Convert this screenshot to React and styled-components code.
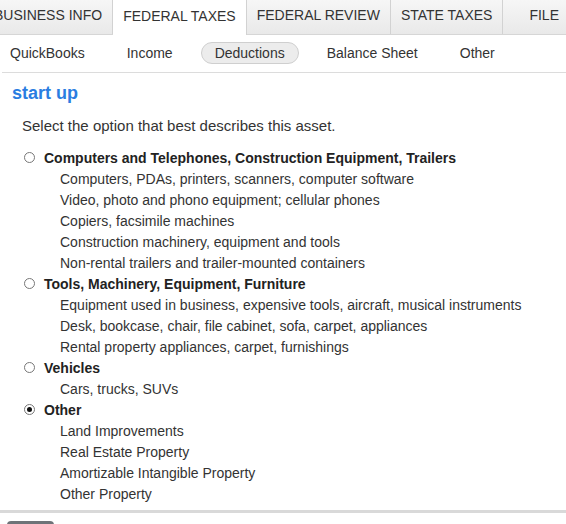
import React from 'react'
import styled, { createGlobalStyle } from 'styled-components'

const GlobalStyle = createGlobalStyle`
  body {
    margin: 0;
    background: #fff;
    font-family: "Liberation Sans", Arial, sans-serif;
    color: #333;
    overflow: hidden;
  }
`

export default function App() {
  const tabs = [
    { label: 'BUSINESS INFO' },
    { label: 'FEDERAL TAXES', active: true },
    { label: 'FEDERAL REVIEW' },
    { label: 'STATE TAXES' },
    { label: 'FILE', wide: true },
  ]

  const subTabs = ['QuickBooks', 'Income', 'Deductions', 'Balance Sheet', 'Other']

  const options = [
    {
      title: 'Computers and Telephones, Construction Equipment, Trailers',
      items: [
        'Computers, PDAs, printers, scanners, computer software',
        'Video, photo and phono equipment; cellular phones',
        'Copiers, facsimile machines',
        'Construction machinery, equipment and tools',
        'Non-rental trailers and trailer-mounted containers',
      ],
    },
    {
      title: 'Tools, Machinery, Equipment, Furniture',
      items: [
        'Equipment used in business, expensive tools, aircraft, musical instruments',
        'Desk, bookcase, chair, file cabinet, sofa, carpet, appliances',
        'Rental property appliances, carpet, furnishings',
      ],
    },
    {
      title: 'Vehicles',
      items: ['Cars, trucks, SUVs'],
    },
    {
      title: 'Other',
      checked: true,
      items: [
        'Land Improvements',
        'Real Estate Property',
        'Amortizable Intangible Property',
        'Other Property',
      ],
    },
  ]

  return (
    <Page>
      <GlobalStyle />
      <TabBar>
        {tabs.map((tab) => (
          <Tab key={tab.label} $active={tab.active} $wide={tab.wide}>
            {tab.label}
          </Tab>
        ))}
      </TabBar>
      <SubNav>
        {subTabs.map((item) => (
          <SubTab key={item} $active={item === 'Deductions'}>
            {item}
          </SubTab>
        ))}
      </SubNav>
      <Content>
        <Title>start up</Title>
        <Prompt>Select the option that best describes this asset.</Prompt>
        <OptionList>
          {options.map((opt) => (
            <Option key={opt.title}>
              <OptionLabel>
                <Radio $checked={opt.checked} />
                {opt.title}
              </OptionLabel>
              {opt.items.map((item) => (
                <SubItem key={item}>{item}</SubItem>
              ))}
            </Option>
          ))}
        </OptionList>
      </Content>
      <Footer>
        <FooterButton />
      </Footer>
    </Page>
  )
}

const Page = styled.div`
  width: 566px;
  height: 524px;
  overflow: hidden;
`

const TabBar = styled.div`
  display: flex;
  height: 34px;
  margin-left: -16px;
  background: linear-gradient(#f6f6f6, #e9e9e9);
  border-bottom: 1px solid #d6d6d6;
`

const Tab = styled.div`
  display: flex;
  align-items: center;
  justify-content: ${(p) => (p.$wide ? 'flex-start' : 'center')};
  padding: 0 ${(p) => (p.$wide ? '26px' : '10px')} 4px;
  font-size: 14px;
  color: #333;
  white-space: nowrap;
  border-right: 1px solid #d2d2d2;
  background: ${(p) => (p.$active ? '#fff' : 'transparent')};
  height: ${(p) => (p.$active ? '35px' : '34px')};
  box-sizing: border-box;
  &:last-child {
    border-right: none;
  }
`

const SubNav = styled.div`
  display: flex;
  align-items: center;
  gap: 14px;
  height: 38px;
  margin-left: 2px;
  padding-bottom: 1px;
  box-sizing: border-box;
  border-bottom: 1px solid #dcdcdc;
  > :first-child {
    margin-left: -6px;
  }
`

const SubTab = styled.div`
  display: flex;
  align-items: center;
  height: 20px;
  padding: 0 13px;
  font-size: 14px;
  color: #333;
  border-radius: 11px;
  border: 1px solid ${(p) => (p.$active ? '#cfcfcf' : 'transparent')};
  background: ${(p) => (p.$active ? '#ececec' : 'transparent')};
`

const Content = styled.div`
  padding: 9px 0 0 12px;
`

const Title = styled.h2`
  margin: 0;
  font-size: 18px;
  line-height: 22px;
  font-weight: bold;
  color: #2a7de1;
`

const Prompt = styled.p`
  margin: 12px 0 0 10px;
  font-size: 15px;
  line-height: 20px;
`

const OptionList = styled.div`
  margin-top: 11px;
  display: flex;
  flex-direction: column;
`

const Option = styled.div`
  display: flex;
  flex-direction: column;
`

const OptionLabel = styled.div`
  display: flex;
  align-items: center;
  gap: 9px;
  margin-left: 12px;
  height: 21px;
  font-size: 14px;
  font-weight: bold;
  color: #222;
`

const Radio = styled.span`
  position: relative;
  width: 11px;
  height: 11px;
  border: 1px solid #777;
  border-radius: 50%;
  box-sizing: border-box;
  background: #fff;
  &::after {
    content: '';
    display: ${(p) => (p.$checked ? 'block' : 'none')};
    position: absolute;
    left: 2px;
    top: 2px;
    width: 5px;
    height: 5px;
    border-radius: 50%;
    background: #111;
  }
`

const SubItem = styled.div`
  margin-left: 48px;
  height: 21px;
  line-height: 22px;
  font-size: 14px;
  color: #333;
`

const Footer = styled.div`
  margin-top: 6px;
  padding-left: 4px;
  border-top: 3px solid #d9d9d9;
`

const FooterButton = styled.div`
  margin: 8px 0 0 3px;
  width: 47px;
  height: 12px;
  border-radius: 4px 4px 0 0;
  background: #6e7378;
`
